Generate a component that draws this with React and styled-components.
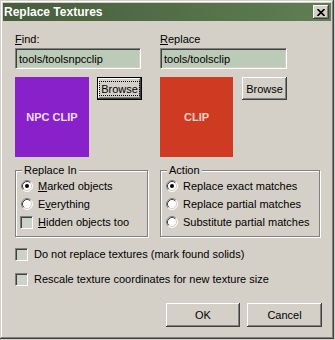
import React from "react";
import styled, { createGlobalStyle, css } from "styled-components";

const GlobalStyle = createGlobalStyle`
  html, body {
    margin: 0;
    background: #d4d0c8;
  }
  body {
    font-family: "Liberation Sans", Arial, sans-serif;
    font-size: 11px;
    color: #000;
  }
`;

const raised = css`
  background: #d4d0c8;
  box-shadow: inset -1px -1px #404040, inset 1px 1px #fff,
    inset -2px -2px #808080, inset 2px 2px #d4d0c8;
`;

const Window = styled.div`
  width: 334px;
  height: 339px;
  box-sizing: border-box;
  padding: 3px;
  display: flex;
  flex-direction: column;
  background: #d4d0c8;
  box-shadow: inset -1px -1px #404040, inset 1px 1px #d4d0c8,
    inset -2px -2px #808080, inset 2px 2px #fff;
`;

const TitleBar = styled.div`
  height: 18px;
  flex: none;
  display: flex;
  align-items: center;
  justify-content: space-between;
  padding: 0 2px 0 1px;
  background: linear-gradient(to right, #465d3c, #5f7f52);
  color: #fff;
  font-weight: bold;
  font-size: 12px;
`;

const CloseButton = styled.div`
  ${raised};
  width: 16px;
  height: 14px;
  display: flex;
  align-items: center;
  justify-content: center;
`;

const Body = styled.div`
  flex: 1;
  padding: 12px 9px 0 12px;
  display: flex;
  flex-direction: column;
`;

const Grid = styled.div`
  display: grid;
  grid-template-columns: 133px 160px;
  column-gap: 12px;
  row-gap: 13px;
`;

const Field = styled.div`
  display: flex;
  flex-direction: column;
`;

const Label = styled.div`
  line-height: 13px;
  height: 13px;
  margin-bottom: 2px;
`;

const Key = styled.span`
  text-decoration: underline;
  text-underline-offset: 1px;
`;

const TextBox = styled.div`
  width: ${(p) => p.$width}px;
  height: 21px;
  box-sizing: border-box;
  padding: 0 3px;
  display: flex;
  align-items: center;
  background: #bccab8;
  border-top: 1px solid #808080;
  border-left: 1px solid #808080;
  border-bottom: 1px solid #fff;
  border-right: 1px solid #fff;
  box-shadow: inset 1px 1px #404040, inset -1px -1px #d4d0c8;
`;

const PreviewRow = styled.div`
  display: flex;
  align-items: flex-start;
  gap: ${(p) => p.$gap}px;
  margin-top: 8px;
`;

const Swatch = styled.div`
  width: ${(p) => p.$width}px;
  height: 80px;
  display: flex;
  align-items: center;
  justify-content: center;
  background: ${(p) => p.$bg};
  color: ${(p) => p.$fg};
  font-weight: bold;
  font-size: 11px;
`;

const Button = styled.div`
  ${raised};
  width: ${(p) => p.$width}px;
  height: ${(p) => p.$height}px;
  box-sizing: border-box;
  display: flex;
  align-items: center;
  justify-content: center;
  ${(p) =>
    p.$focused &&
    css`
      border: 1px solid #000;
    `}
`;

const FocusRing = styled.span`
  outline: 1px dotted #000;
  padding: 1px 1px 0;
  line-height: 12px;
`;

const Group = styled.div`
  position: relative;
  border: 1px solid #808080;
  box-shadow: 1px 1px 0 #fff, inset 1px 1px 0 #fff;
  padding: 6px 0 5px 5px;
`;

const Legend = styled.span`
  position: absolute;
  top: -7px;
  left: 6px;
  padding: 0 2px;
  line-height: 13px;
  background: #d4d0c8;
`;

const OptionRow = styled.div`
  height: 18px;
  display: flex;
  align-items: center;
  gap: 5px;
`;

const CheckBox = styled.span`
  width: 13px;
  height: 13px;
  flex: none;
  box-sizing: border-box;
  background: #cbd3c7;
  border-top: 1px solid #808080;
  border-left: 1px solid #808080;
  border-bottom: 1px solid #fff;
  border-right: 1px solid #fff;
  box-shadow: inset 1px 1px #404040, inset -1px -1px #d4d0c8;
  margin-left: ${(p) => (p.$inset ? -1 : 0)}px;
`;

const CheckRow = styled.div`
  display: flex;
  align-items: center;
  gap: 6px;
  height: 13px;
  line-height: 13px;
  margin-top: ${(p) => p.$top}px;
`;

const ButtonRow = styled.div`
  display: flex;
  justify-content: flex-end;
  gap: 7px;
  margin-top: 17px;
`;

const Radio = ({ checked }) => (
  <svg width="12" height="12" viewBox="0 0 12 12" style={{ flex: "none" }}>
    <circle cx="6" cy="6" r="5" fill="#fff" />
    <path d="M2.11 9.89 A5.5 5.5 0 0 1 9.89 2.11" fill="none" stroke="#808080" />
    <path d="M9.89 2.11 A5.5 5.5 0 0 1 2.11 9.89" fill="none" stroke="#fff" />
    <path d="M2.82 9.18 A4.5 4.5 0 0 1 9.18 2.82" fill="none" stroke="#404040" />
    <path d="M9.18 2.82 A4.5 4.5 0 0 1 2.82 9.18" fill="none" stroke="#d4d0c8" />
    {checked && <circle cx="6" cy="6" r="2" fill="#000" />}
  </svg>
);

const CloseGlyph = () => (
  <svg width="8" height="7" viewBox="0 0 8 7">
    <path d="M0.5 0 L7.5 7 M7.5 0 L0.5 7" stroke="#000" strokeWidth="1.6" />
  </svg>
);

export default function App() {
  return (
    <>
      <GlobalStyle />
      <Window>
        <TitleBar>
          <span>Replace Textures</span>
          <CloseButton>
            <CloseGlyph />
          </CloseButton>
        </TitleBar>
        <Body>
          <Grid>
            <Field>
              <Label>
                <Key>F</Key>ind:
              </Label>
              <TextBox $width={126}>tools/toolsnpcclip</TextBox>
              <PreviewRow $gap={8}>
                <Swatch $width={74} $bg="#8921cb" $fg="#eedff8">
                  NPC CLIP
                </Swatch>
                <Button $width={45} $height={23} $focused>
                  <FocusRing>Browse</FocusRing>
                </Button>
              </PreviewRow>
            </Field>
            <Field>
              <Label>
                <Key>R</Key>eplace
              </Label>
              <TextBox $width={127}>tools/toolsclip</TextBox>
              <PreviewRow $gap={9}>
                <Swatch $width={73} $bg="#cf3a22" $fg="#f6d6cc">
                  CLIP
                </Swatch>
                <Button $width={45} $height={23}>
                  Browse
                </Button>
              </PreviewRow>
            </Field>

            <Group>
              <Legend>Replace In</Legend>
              <OptionRow>
                <Radio checked />
                <span>
                  <Key>M</Key>arked objects
                </span>
              </OptionRow>
              <OptionRow>
                <Radio />
                <span>
                  E<Key>v</Key>erything
                </span>
              </OptionRow>
              <OptionRow>
                <CheckBox $inset />
                <span>
                  <Key>H</Key>idden objects too
                </span>
              </OptionRow>
            </Group>
            <Group>
              <Legend>Action</Legend>
              <OptionRow>
                <Radio checked />
                <span>Replace exact matches</span>
              </OptionRow>
              <OptionRow>
                <Radio />
                <span>Replace partial matches</span>
              </OptionRow>
              <OptionRow>
                <Radio />
                <span>Substitute partial matches</span>
              </OptionRow>
            </Group>
          </Grid>

          <CheckRow $top={11}>
            <CheckBox />
            <span>Do not replace textures (mark found solids)</span>
          </CheckRow>
          <CheckRow $top={12}>
            <CheckBox />
            <span>Rescale texture coordinates for new texture size</span>
          </CheckRow>

          <ButtonRow>
            <Button $width={74} $height={24}>
              OK
            </Button>
            <Button $width={75} $height={24}>
              Cancel
            </Button>
          </ButtonRow>
        </Body>
      </Window>
    </>
  );
}
